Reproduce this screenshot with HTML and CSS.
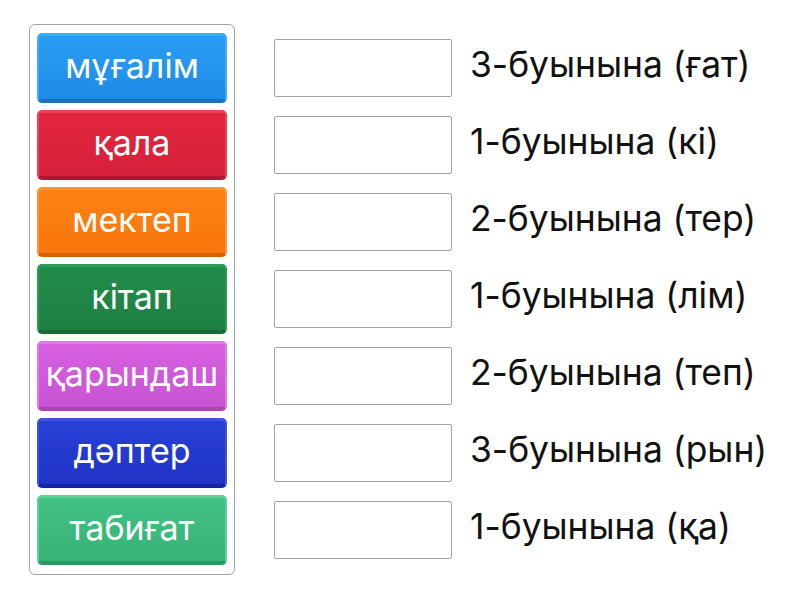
FILE: index.html
```html
<!DOCTYPE html>
<html>
<head>
<meta charset="utf-8">
<link rel="stylesheet" href="styles.css">
</head>
<body>
<div class="page">
  <div class="tray">
    <div class="tile blue">мұғалім</div>
    <div class="tile red">қала</div>
    <div class="tile orange">мектеп</div>
    <div class="tile green">кітап</div>
    <div class="tile purple">қарындаш</div>
    <div class="tile navy">дәптер</div>
    <div class="tile mint">табиғат</div>
  </div>
  <div class="targets">
    <div class="row"><div class="slot"></div><div class="label">3-буынына (ғат)</div></div>
    <div class="row"><div class="slot"></div><div class="label">1-буынына (кі)</div></div>
    <div class="row"><div class="slot"></div><div class="label">2-буынына (тер)</div></div>
    <div class="row"><div class="slot"></div><div class="label">1-буынына (лім)</div></div>
    <div class="row"><div class="slot"></div><div class="label">2-буынына (теп)</div></div>
    <div class="row"><div class="slot"></div><div class="label">3-буынына (рын)</div></div>
    <div class="row"><div class="slot"></div><div class="label">1-буынына (қа)</div></div>
  </div>
</div>
</body>
</html>
```

FILE: styles.css
```css
html, body {
  margin: 0;
  padding: 0;
  background: #ffffff;
  font-family: Inter, "Noto Sans", sans-serif;
}
.page {
  display: flex;
  align-items: flex-start;
  width: 800px;
  height: 600px;
}
.tray {
  margin: 24px 0 0 29px;
  border: 1px solid #a3a3a3;
  border-radius: 6px;
  padding: 8px 7px 9px 7px;
  display: flex;
  flex-direction: column;
  gap: 7px;
}
.tile {
  box-sizing: border-box;
  width: 190px;
  height: 70px;
  border-radius: 5px;
  border-top: 3px solid var(--hi);
  border-left: 2px solid var(--hi);
  border-right: 2px solid var(--hi);
  border-bottom: 4px solid var(--lo);
  background: linear-gradient(to bottom, var(--c1), var(--c2));
  color: #ffffff;
  font-size: 34px;
  line-height: 1;
  padding-bottom: 3px;
  display: flex;
  align-items: center;
  justify-content: center;
  white-space: nowrap;
}
.blue   { --hi: #3eaef7; --c1: #2b9df4; --c2: #1e8be6; --lo: #1772c4; }
.red    { --hi: #ec4158; --c1: #e2283f; --c2: #d61f3a; --lo: #b31530; }
.orange { --hi: #ff9433; --c1: #fe8114; --c2: #f7760c; --lo: #d96003; }
.green  { --hi: #2f9a58; --c1: #228c4a; --c2: #1e8143; --lo: #176a35; }
.purple { --hi: #e078ea; --c1: #d660df; --c2: #c954d3; --lo: #a946b3; }
.navy   { --hi: #3d52e3; --c1: #2840d6; --c2: #2033c7; --lo: #1622a5; }
.mint   { --hi: #5bd498; --c1: #42c184; --c2: #39b276; --lo: #2d9562; }
.targets {
  margin: 39px 0 0 39px;
  display: flex;
  flex-direction: column;
  gap: 19px;
}
.row {
  display: flex;
  align-items: center;
  height: 58px;
}
.slot {
  box-sizing: border-box;
  width: 178px;
  height: 58px;
  border: 1px solid #a3a3a3;
  border-radius: 2px;
  background: #ffffff;
}
.label {
  margin-left: 18px;
  font-size: 35.4px;
  line-height: 1;
  padding-bottom: 6px;
  color: #111111;
  white-space: nowrap;
}
```
